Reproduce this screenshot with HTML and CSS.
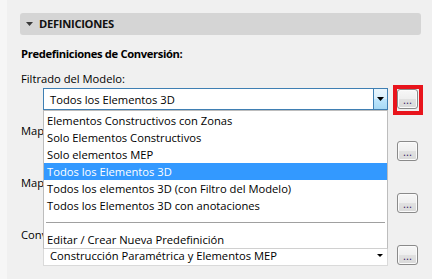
FILE: index.html
```html
<!DOCTYPE html>
<html lang="es">
<head>
<meta charset="utf-8">
<title>Definiciones</title>
<link rel="stylesheet" href="styles.css">
</head>
<body>
<div class="page">
  <div class="section-head">
    <svg class="tri" width="7" height="4" viewBox="0 0 7 4"><path d="M0 0H7L3.5 4Z" fill="#3a3a3a"/></svg>
    <span class="head-text">DEFINICIONES</span>
  </div>
  <div class="body">
    <div class="title">Predefiniciones de Conversión:</div>

    <div class="field first">
      <div class="label">Filtrado del Modelo:</div>
      <div class="row">
        <div class="combo-wrap">
          <div class="combo focus">
            <span class="value">Todos los Elementos 3D</span>
            <span class="drop"><svg width="7" height="4" viewBox="0 0 7 4"><path d="M0 0H7L3.5 4Z" fill="#000"/></svg></span>
          </div>
          <ul class="list">
            <li>Elementos Constructivos con Zonas</li>
            <li>Solo Elementos Constructivos</li>
            <li>Solo elementos MEP</li>
            <li class="sel">Todos los Elementos 3D</li>
            <li>Todos los elementos 3D (con Filtro del Modelo)</li>
            <li>Todos los Elementos 3D con anotaciones</li>
            <li class="sep"></li>
            <li>Editar / Crear Nueva Predefinición</li>
          </ul>
        </div>
        <button class="more marked">...</button>
      </div>
    </div>

    <div class="field">
      <div class="label covered">Mapeado de Tipos:</div>
      <div class="row">
        <div class="combo-wrap">
          <div class="combo">
            <span class="value"></span>
            <span class="drop"><svg width="6" height="3" viewBox="0 0 6 3"><path d="M0 0H6L3 3Z" fill="#000"/></svg></span>
          </div>
        </div>
        <button class="more">...</button>
      </div>
    </div>

    <div class="field">
      <div class="label covered">Mapeado de Propiedades:</div>
      <div class="row">
        <div class="combo-wrap">
          <div class="combo">
            <span class="value"></span>
            <span class="drop"><svg width="6" height="3" viewBox="0 0 6 3"><path d="M0 0H6L3 3Z" fill="#000"/></svg></span>
          </div>
        </div>
        <button class="more">...</button>
      </div>
    </div>

    <div class="field">
      <div class="label covered">Conversión de Geometría:</div>
      <div class="row">
        <div class="combo-wrap">
          <div class="combo">
            <span class="value">Construcción Paramétrica y Elementos MEP</span>
            <span class="drop"><svg width="6" height="3" viewBox="0 0 6 3"><path d="M0 0H6L3 3Z" fill="#000"/></svg></span>
          </div>
        </div>
        <button class="more">...</button>
      </div>
    </div>
  </div>
</div>
</body>
</html>
```
FILE: styles.css
```css
html, body {
  margin: 0;
  height: 100%;
  overflow: hidden;
}

body {
  background: #f0f0f0;
  font-family: "Open Sans", "Noto Sans", sans-serif;
  font-size: 11.2px;
  color: #000;
}

.page {
  box-sizing: border-box;
  min-height: 279px;
  border-left: 7px solid #f6f6f6;
  padding: 13px 11px 0 13px;
}

.section-head {
  height: 22px;
  background: #d5d5d5;
  border-radius: 3px;
  display: flex;
  align-items: center;
  padding-left: 6px;
}

.tri {
  display: block;
  flex: none;
}

.head-text {
  margin-left: 6px;
  font-weight: 700;
  letter-spacing: -0.3px;
  line-height: 22px;
  color: #111;
}

.body {
  padding: 11px 0 0 1px;
}

.title {
  font-weight: 700;
  line-height: 16px;
  letter-spacing: -0.35px;
  white-space: nowrap;
}

.field {
  margin-top: 13px;
}

.field.first {
  margin-top: 9px;
}

.label {
  line-height: 16px;
  margin-bottom: 1px;
  white-space: nowrap;
}

/* label partly hidden behind the open dropdown list */
.label.covered {
  width: 22px;
  overflow: hidden;
}

.row {
  display: flex;
  align-items: flex-start;
  margin-left: 22px;
}

.combo-wrap {
  position: relative;
  width: 345px;
  flex: none;
}

.combo {
  box-sizing: border-box;
  height: 22px;
  border: 1px solid #dadada;
  background: #fff;
  display: flex;
}

.combo.focus {
  border-color: #3f7fb3;
}

.value {
  flex: 1;
  padding: 1px 0 0 6px;
  line-height: 19px;
  white-space: nowrap;
  overflow: hidden;
}

.drop {
  width: 14px;
  display: flex;
  align-items: center;
  justify-content: center;
  flex: none;
}

.drop svg {
  display: block;
}

.combo.focus .drop {
  box-sizing: border-box;
  border-left: 1px solid #3f7fb3;
  background: linear-gradient(#eaf6fd 0%, #d9effc 48%, #bee6fd 52%, #a7d9f5 100%);
}

.list {
  position: absolute;
  left: 0;
  top: 100%;
  z-index: 5;
  box-sizing: border-box;
  width: 345px;
  margin: 0;
  padding: 1px 0 0;
  list-style: none;
  background: #fff;
  border: 1px solid #bdbdbd;
  border-bottom-color: #d0d0d0;
}

.list li {
  height: 17px;
  line-height: 17px;
  padding-left: 3px;
  white-space: nowrap;
}

.list li.sel {
  background: #3399ff;
  color: #fff;
}

.list li.sep {
  height: 1px;
  padding: 0;
  margin: 8px 2px;
  background: #a0a0a0;
}

.more {
  position: relative;
  flex: none;
  box-sizing: border-box;
  width: 21px;
  height: 20px;
  margin: 1px 0 0 9px;
  padding: 1px 0 0;
  border: 1px solid #8a8a8a;
  border-radius: 3px;
  background: linear-gradient(#f7f7f7 0%, #efefef 48%, #e1e1e1 52%, #d9d9d9 100%);
  box-shadow: inset 0 0 0 1px #fbfbfb;
  font-family: "Open Sans", "Noto Sans", sans-serif;
  font-size: 11.2px;
  line-height: 18px;
  color: #3e1d66;
  text-align: center;
}

.more.marked::after {
  content: "";
  position: absolute;
  left: -5px;
  top: -5px;
  width: 30px;
  height: 30px;
  box-sizing: border-box;
  border: 4px solid #e8141c;
}
```
